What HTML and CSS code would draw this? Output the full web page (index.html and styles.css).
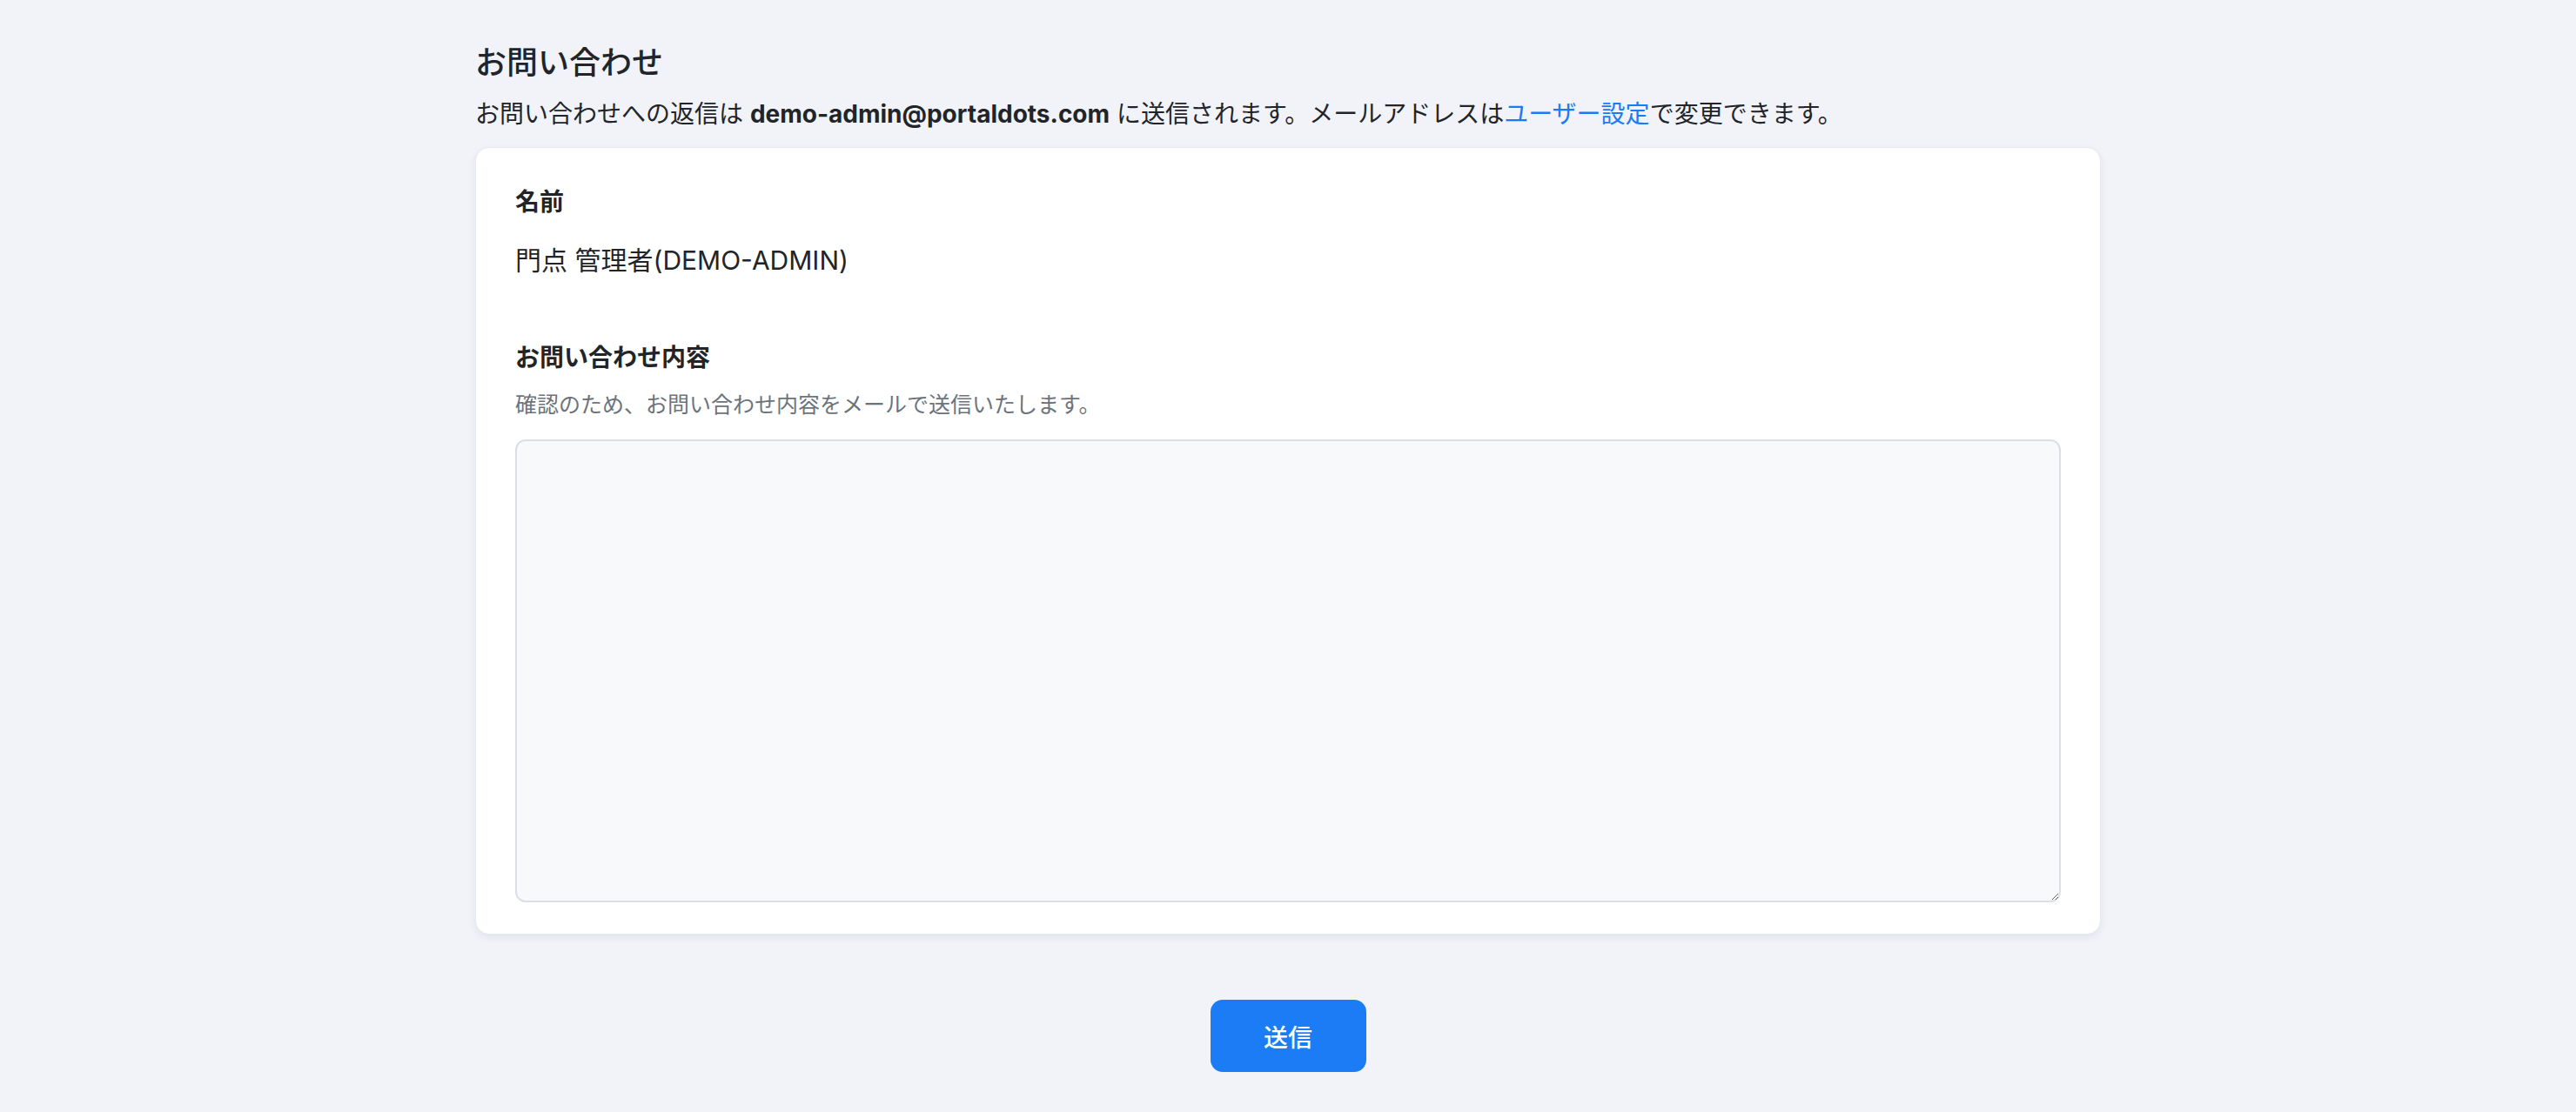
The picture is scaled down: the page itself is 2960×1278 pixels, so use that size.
FILE: index.html
```html
<!DOCTYPE html>
<html lang="ja">
<head>
<meta charset="utf-8">
<title>お問い合わせ</title>
<link rel="stylesheet" href="styles.css">
</head>
<body>
<main class="page">
  <header class="page-header">
    <h1 class="page-title">お問い合わせ</h1>
    <p class="page-desc">お問い合わせへの返信は <strong class="email">demo-admin@portaldots.com</strong> に送信されます。メールアドレスは<a class="link" href="#">ユーザー設定</a>で変更できます。</p>
  </header>
  <form class="card">
    <div class="field">
      <div class="field-label">名前</div>
      <div class="field-value">門点 管理者(DEMO-ADMIN)</div>
    </div>
    <div class="field field-body">
      <label class="field-label" for="body">お問い合わせ内容</label>
      <div class="field-help">確認のため、お問い合わせ内容をメールで送信いたします。</div>
      <textarea id="body" class="textarea"></textarea>
    </div>
  </form>
  <div class="actions">
    <button class="btn-primary" type="button">送信</button>
  </div>
</main>
</body>
</html>
```

FILE: styles.css
```css
* { box-sizing: border-box; }

html, body {
  margin: 0;
  padding: 0;
  background: #f1f3f8;
}

body {
  font-family: "Inter", "Noto Sans CJK JP", "Noto Sans", sans-serif;
  color: #212529;
}

.page {
  width: 1868px;
  margin: 0 auto;
  padding-top: 50px;
}

.page-header {
  display: flex;
  flex-direction: column;
  gap: 19px;
  margin-bottom: 20px;
}

.page-title {
  margin: 0;
  font-size: 36px;
  line-height: 44px;
  font-weight: 500;
}

.page-desc {
  margin: 0;
  font-size: 28px;
  line-height: 36px;
  font-weight: 400;
}

.email {
  font-weight: 700;
}

.link {
  color: #1a7cf5;
  text-decoration: none;
}

.card {
  background: #ffffff;
  border: 1px solid #e8eaf0;
  border-radius: 16px;
  box-shadow: 0 3px 8px rgba(30, 40, 60, 0.08);
  padding: 45px 45px 36px;
  display: flex;
  flex-direction: column;
}

.field {
  display: flex;
  flex-direction: column;
}

.field-label {
  font-size: 28px;
  line-height: 34px;
  font-weight: 600;
}

.field-value {
  margin-top: 28px;
  font-size: 30px;
  line-height: 44px;
}

.field-body {
  margin-top: 73px;
}

.field-help {
  margin-top: 20px;
  font-size: 25px;
  line-height: 34px;
  color: #6c737c;
}

.textarea {
  margin-top: 23px;
  width: 100%;
  height: 532px;
  background: #f8f9fb;
  border: 2px solid #dadee5;
  border-radius: 12px;
  font-family: inherit;
  font-size: 28px;
  padding: 14px 18px;
  resize: vertical;
}

.actions {
  display: flex;
  justify-content: center;
  margin-top: 75px;
}

.btn-primary {
  width: 179px;
  height: 83px;
  border: none;
  border-radius: 14px;
  background: #1b7cf5;
  color: #ffffff;
  font-family: "Inter", "Noto Sans CJK JP", sans-serif;
  font-size: 28px;
  font-weight: 500;
}
```
